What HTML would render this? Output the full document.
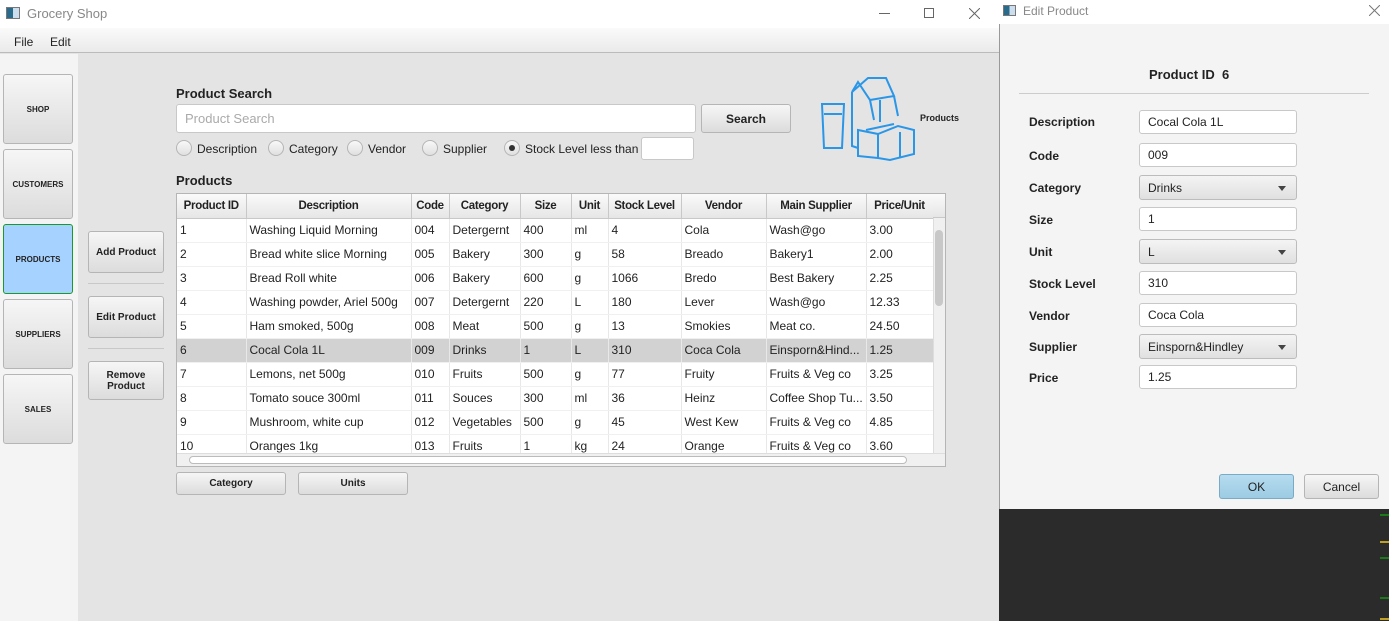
<!DOCTYPE html>
<html><head><meta charset="utf-8"><style>
*{box-sizing:border-box;margin:0;padding:0}
body{width:1389px;height:621px;position:relative;overflow:hidden;font-family:"Liberation Sans",sans-serif;font-size:12px;color:#222;background:#e4e4e4}
.a{position:absolute}
.btn{position:absolute;border:1px solid #b5b5b5;border-radius:3px;background:linear-gradient(#f6f6f6,#dcdcdc);font-weight:bold;font-size:10px;display:flex;align-items:center;justify-content:center;text-align:center;color:#222}
.side{left:3px;width:70px;height:70px;font-size:8px}
.tf{position:absolute;background:#fff;border:1px solid #c8c8c8;border-radius:3px;padding-left:8px;display:flex;align-items:center;font-size:12px}
.cb{position:absolute;border:1px solid #bcbcbc;border-radius:3px;background:linear-gradient(#f4f4f4,#e0e0e0);padding-left:8px;display:flex;align-items:center;font-size:12px}
.cb:after{content:"";position:absolute;right:10px;top:10px;border:4px solid transparent;border-top:5px solid #444}
.lbl{position:absolute;left:1029px;font-weight:bold;font-size:12px}
.rd{position:absolute;top:140px;width:16px;height:16px;border-radius:50%;border:1px solid #b5b5b5;background:linear-gradient(#f8f8f8,#e0e0e0)}
.rt{position:absolute;top:142px;font-size:12px}
table{border-collapse:collapse;table-layout:fixed;font-size:12px}
td,th{height:24px;padding:0 3px;white-space:nowrap;overflow:hidden;border-right:1px solid #e8e8e8;border-bottom:1px solid #f0f0f0;text-align:left}
th{background:linear-gradient(#fafafa,#e6e6e6);border-right:1px solid #c8c8c8;border-bottom:1px solid #c8c8c8;text-align:center;font-weight:bold;font-size:11.5px;letter-spacing:-0.3px;padding:0 1px}
tr.s td{background:#d2d2d2}
</style></head><body>
<div class="a" style="left:0;top:0;width:999px;height:28px;background:#fff"></div>
<div class="a" style="left:6px;top:7px;width:14px;height:12px;border:1px solid #777;background:linear-gradient(90deg,#2a6a8a 50%,#cde 50%)"></div>
<div class="a" style="left:27px;top:6px;font-size:13px;color:#888">Grocery Shop</div>
<div class="a" style="left:879px;top:13px;width:11px;height:1px;background:#666"></div>
<div class="a" style="left:924px;top:8px;width:10px;height:10px;border:1px solid #666"></div>
<svg class="a" style="left:969px;top:8px" width="11" height="11"><path d="M0 0L11 11M11 0L0 11" stroke="#666" stroke-width="1"/></svg>
<div class="a" style="left:0;top:28px;width:999px;height:25px;background:linear-gradient(#fafafa,#eaeaea);border-bottom:1px solid #bbb"></div>
<div class="a" style="left:14px;top:35px;font-size:12px">File</div>
<div class="a" style="left:50px;top:35px;font-size:12px">Edit</div>
<div class="a" style="left:0;top:54px;width:78px;height:567px;background:#f4f4f4"></div>
<div class="btn side" style="top:74px">SHOP</div>
<div class="btn side" style="top:149px">CUSTOMERS</div>
<div class="btn side" style="top:224px;background:#a6d2ff;border-color:#1a9a2a">PRODUCTS</div>
<div class="btn side" style="top:299px">SUPPLIERS</div>
<div class="btn side" style="top:374px">SALES</div>
<div class="btn" style="left:88px;top:231px;width:76px;height:42px">Add Product</div>
<div class="a" style="left:88px;top:283px;width:76px;height:1px;background:#c8c8c8"></div>
<div class="btn" style="left:88px;top:296px;width:76px;height:42px">Edit Product</div>
<div class="a" style="left:88px;top:348px;width:76px;height:1px;background:#c8c8c8"></div>
<div class="btn" style="left:88px;top:361px;width:76px;height:39px">Remove<br>Product</div>
<div class="a" style="left:176px;top:86px;font-weight:bold;font-size:13px">Product Search</div>
<div class="tf" style="left:176px;top:104px;width:520px;height:29px;color:#aaa;font-size:13px">Product Search</div>
<div class="btn" style="left:701px;top:104px;width:90px;height:29px;font-size:12px">Search</div>
<div class="rd" style="left:176px"></div><div class="rt" style="left:197px">Description</div>
<div class="rd" style="left:268px"></div><div class="rt" style="left:289px">Category</div>
<div class="rd" style="left:347px"></div><div class="rt" style="left:368px">Vendor</div>
<div class="rd" style="left:422px"></div><div class="rt" style="left:443px">Supplier</div>
<div class="rd" style="left:504px"><div style="position:absolute;left:4px;top:4px;width:6px;height:6px;border-radius:50%;background:#333"></div></div><div class="rt" style="left:525px">Stock Level less than</div>
<div class="tf" style="left:641px;top:137px;width:53px;height:23px"></div>
<svg class="a" style="left:818px;top:74px" width="100" height="92" viewBox="0 0 100 92" fill="none" stroke="#2a96e8" stroke-width="2">
<path d="M34 18 L34 72 L40 74 M34 18 L50 4 L68 4 L76 22 L52 26 L40 8 Z M52 26 L56 46 M76 22 L80 42 M62 26 L62 48"/>
<path d="M4 30 L26 30 L24 74 L6 74 Z M6 40 L24 40"/>
<path d="M40 56 L40 82 L60 84 L60 60 Z M60 60 L80 52 L96 56 L96 80 L72 86 L60 84 M82 58 L82 84"/>
<path d="M48 56 L76 50"/>
</svg>
<div class="a" style="left:920px;top:113px;font-size:9px;font-weight:bold">Products</div>
<div class="a" style="left:176px;top:173px;font-weight:bold;font-size:13px">Products</div>
<div class="a" style="left:176px;top:193px;width:770px;height:274px;background:#fff;border:1px solid #b5b5b5;overflow:hidden">
<table style="width:756px">
<colgroup><col style="width:69px"><col style="width:165px"><col style="width:38px"><col style="width:71px"><col style="width:51px"><col style="width:37px"><col style="width:73px"><col style="width:85px"><col style="width:100px"><col style="width:67px"></colgroup>
<tr><th>Product ID</th><th>Description</th><th>Code</th><th>Category</th><th>Size</th><th>Unit</th><th>Stock Level</th><th>Vendor</th><th>Main Supplier</th><th>Price/Unit</th></tr>
<tr><td>1</td><td>Washing Liquid Morning</td><td>004</td><td>Detergernt</td><td>400</td><td>ml</td><td>4</td><td>Cola</td><td>Wash@go</td><td>3.00</td></tr>
<tr><td>2</td><td>Bread white slice Morning</td><td>005</td><td>Bakery</td><td>300</td><td>g</td><td>58</td><td>Breado</td><td>Bakery1</td><td>2.00</td></tr>
<tr><td>3</td><td>Bread Roll white</td><td>006</td><td>Bakery</td><td>600</td><td>g</td><td>1066</td><td>Bredo</td><td>Best Bakery</td><td>2.25</td></tr>
<tr><td>4</td><td>Washing powder, Ariel 500g</td><td>007</td><td>Detergernt</td><td>220</td><td>L</td><td>180</td><td>Lever</td><td>Wash@go</td><td>12.33</td></tr>
<tr><td>5</td><td>Ham smoked,  500g</td><td>008</td><td>Meat</td><td>500</td><td>g</td><td>13</td><td>Smokies</td><td>Meat co.</td><td>24.50</td></tr>
<tr class="s"><td>6</td><td>Cocal Cola 1L</td><td>009</td><td>Drinks</td><td>1</td><td>L</td><td>310</td><td>Coca Cola</td><td>Einsporn&amp;Hind...</td><td>1.25</td></tr>
<tr><td>7</td><td>Lemons, net  500g</td><td>010</td><td>Fruits</td><td>500</td><td>g</td><td>77</td><td>Fruity</td><td>Fruits &amp; Veg co</td><td>3.25</td></tr>
<tr><td>8</td><td>Tomato souce 300ml</td><td>011</td><td>Souces</td><td>300</td><td>ml</td><td>36</td><td>Heinz</td><td>Coffee Shop Tu...</td><td>3.50</td></tr>
<tr><td>9</td><td>Mushroom, white cup</td><td>012</td><td>Vegetables</td><td>500</td><td>g</td><td>45</td><td>West Kew</td><td>Fruits &amp; Veg co</td><td>4.85</td></tr>
<tr><td>10</td><td>Oranges 1kg</td><td>013</td><td>Fruits</td><td>1</td><td>kg</td><td>24</td><td>Orange</td><td>Fruits &amp; Veg co</td><td>3.60</td></tr>
</table>
<div class="a" style="left:756px;top:0;width:12px;height:24px;background:linear-gradient(#fafafa,#e6e6e6);border-bottom:1px solid #c8c8c8"></div>
<div class="a" style="left:756px;top:24px;width:12px;height:236px;background:#f0f0f0;border-left:1px solid #ddd"></div>
<div class="a" style="left:758px;top:36px;width:8px;height:76px;background:#c8c8c8;border-radius:4px"></div>
<div class="a" style="left:0;top:259px;width:768px;height:14px;background:#f0f0f0;border-top:1px solid #ddd"></div>
<div class="a" style="left:12px;top:262px;width:718px;height:8px;background:#fff;border:1px solid #bbb;border-radius:4px"></div>
</div>
<div class="btn" style="left:176px;top:472px;width:110px;height:23px">Category</div>
<div class="btn" style="left:298px;top:472px;width:110px;height:23px">Units</div>
<div class="a" style="left:999px;top:0;width:390px;height:509px;background:#f4f4f4;border-left:1px solid #999"></div>
<div class="a" style="left:999px;top:0;width:390px;height:24px;background:#fff"></div>
<div class="a" style="left:1003px;top:5px;width:13px;height:11px;border:1px solid #777;background:linear-gradient(90deg,#2a6a8a 50%,#cde 50%)"></div>
<div class="a" style="left:1023px;top:4px;font-size:12px;color:#888">Edit Product</div>
<svg class="a" style="left:1369px;top:5px" width="11" height="11"><path d="M0 0L11 11M11 0L0 11" stroke="#777" stroke-width="1"/></svg>
<div class="a" style="left:1149px;top:67px;font-weight:bold;font-size:13px">Product ID&nbsp;&nbsp;6</div>
<div class="a" style="left:1019px;top:93px;width:350px;height:1px;background:#ccc"></div>
<div class="lbl" style="top:115px">Description</div><div class="tf" style="left:1139px;top:110px;width:158px;height:24px">Cocal Cola 1L</div>
<div class="lbl" style="top:149px">Code</div><div class="tf" style="left:1139px;top:143px;width:158px;height:24px">009</div>
<div class="lbl" style="top:181px">Category</div><div class="cb" style="left:1139px;top:175px;width:158px;height:25px">Drinks</div>
<div class="lbl" style="top:213px">Size</div><div class="tf" style="left:1139px;top:207px;width:158px;height:24px">1</div>
<div class="lbl" style="top:245px">Unit</div><div class="cb" style="left:1139px;top:239px;width:158px;height:25px">L</div>
<div class="lbl" style="top:277px">Stock Level</div><div class="tf" style="left:1139px;top:271px;width:158px;height:24px">310</div>
<div class="lbl" style="top:309px">Vendor</div><div class="tf" style="left:1139px;top:303px;width:158px;height:24px">Coca Cola</div>
<div class="lbl" style="top:340px">Supplier</div><div class="cb" style="left:1139px;top:334px;width:158px;height:25px">Einsporn&amp;Hindley</div>
<div class="lbl" style="top:371px">Price</div><div class="tf" style="left:1139px;top:365px;width:158px;height:24px">1.25</div>
<div class="btn" style="left:1219px;top:474px;width:75px;height:25px;font-weight:normal;font-size:12px;background:linear-gradient(#b6dcef,#9ccbe3);border-color:#7aaac4">OK</div>
<div class="btn" style="left:1304px;top:474px;width:75px;height:25px;font-weight:normal;font-size:12px">Cancel</div>
<div class="a" style="left:999px;top:509px;width:390px;height:112px;background:#2b2b2b"></div>
<div class="a" style="left:1380px;top:514px;width:9px;height:2px;background:#1a7a1a"></div>
<div class="a" style="left:1380px;top:541px;width:9px;height:2px;background:#c0a020"></div>
<div class="a" style="left:1380px;top:557px;width:9px;height:2px;background:#1a7a1a"></div>
<div class="a" style="left:1380px;top:597px;width:9px;height:2px;background:#1a7a1a"></div>
<div class="a" style="left:1380px;top:618px;width:9px;height:2px;background:#c0a020"></div>
</body></html>
